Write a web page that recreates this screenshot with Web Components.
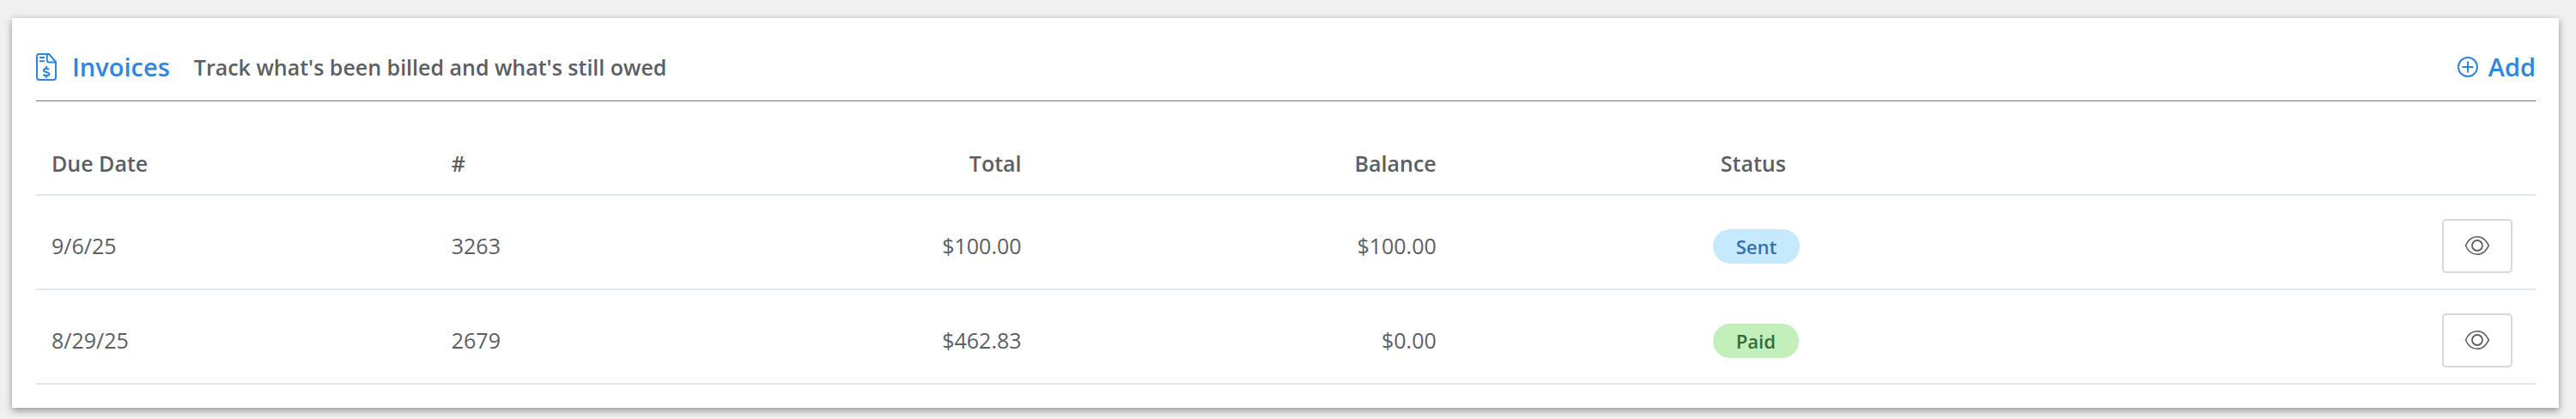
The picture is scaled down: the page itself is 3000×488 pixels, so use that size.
<!DOCTYPE html>
<html lang="en">
<head>
<meta charset="utf-8">
<title>Invoices</title>
<style>
  body {
    margin: 0;
    padding: 21px 20px 13px 14px;
    background: #f0f0f0;
    color: #5b5f63;
    font: 400 25px/36px "Open Sans", sans-serif;
  }
</style>
</head>
<body>
<panel-card>
  <ui-icon slot="icon" name="invoice"></ui-icon>
  <span slot="title">Invoices</span>
  <span slot="hint">Track what's been billed and what's still owed</span>
  <add-button slot="action">Add</add-button>
  <invoice-table></invoice-table>
</panel-card>

<script>
const ICONS = {
  invoice: [24, 32, `<g fill="none" stroke="currentColor" stroke-width="2"><path d="M3.500 1H15L23 10V28Q23 31 20 31H4Q1 31 1 28V3.500Q1 1 3.500 1Z"/><path d="M12.800 1V8Q12.800 10.500 15 10.500H23"/><path d="M4 5H10M4 9.200H10" stroke-width="2"/><path d="M15.200 19Q14 18 12 18Q9 18 9 20Q9 21.400 12 22Q15.200 22.600 15.200 24.300Q15.200 26 12 26Q10 26 8.400 25M12 15V18M12 26V28.800" stroke-width="2.200"/></g>`],
  plus: [24, 24, `<g fill="none" stroke="currentColor" stroke-width="2"><circle cx="12" cy="12" r="11"/><path d="M12 5.500V18.500M5.500 12H18.500"/></g>`],
  eye: [30, 24, `<g fill="none" stroke="currentColor" stroke-width="1.500"><path d="M1.500 12C4 6 8 1.700 15 1.700S25 6 28.500 12C25 18 22 22.300 15 22.300S4 18 1.500 12Z"/><circle cx="15" cy="12" r="6" stroke-width="1.800"/></g>`]
};

class UiIcon extends HTMLElement {
  connectedCallback() {
    if (this.shadowRoot) return;
    const [w, h, art] = ICONS[this.getAttribute("name")];
    this.attachShadow({ mode: "open" }).innerHTML =
      `<style>:host{display:inline-flex;flex:none}svg{display:block}</style>
       <svg width="${w}" height="${h}" viewBox="0 0 ${w} ${h}" aria-hidden="true">${art}</svg>`;
  }
}
customElements.define("ui-icon", UiIcon);

function define(name, html) {
  customElements.define(name, class extends HTMLElement {
    constructor() {
      super();
      this.attachShadow({ mode: "open" }).innerHTML = html;
    }
  });
}

define("add-button", `
<style>
  :host { display: block; }
  button { display: flex; align-items: center; gap: 12px; padding: 0; border: 0; background: none; color: #2f86dc; font: inherit; cursor: pointer; }
</style>
<button type="button"><ui-icon name="plus"></ui-icon><slot></slot></button>`);

define("view-button", `
<style>
  :host { display: inline-block; vertical-align: top; }
  button { display: flex; align-items: center; justify-content: center; width: 82px; height: 63px; padding: 0; border: 2px solid #d8d8d8; border-radius: 5px; background: #fff; color: inherit; cursor: pointer; }
</style>
<button type="button" aria-label="View invoice"><ui-icon name="eye"></ui-icon></button>`);

define("status-badge", `
<style>
  :host { display: inline-block; vertical-align: top; padding: 0 27px; border-radius: 20px; font-size: 22px; line-height: 40px; font-weight: 600; background: #c7e9fd; color: #3470b2; }
  :host([kind="paid"]) { background: #c3efba; color: #376a38; }
</style>
<slot></slot>`);

define("panel-card", `
<style>
  :host { display: block; padding: 0 27px 27px 28px; background: #fff; box-shadow: 0 4px 8px rgba(0,0,0,.3), 0 0 8px rgba(0,0,0,.12); }
  header { display: flex; align-items: center; gap: 28px; padding: 38px 0 20px; border-bottom: 1px solid #3b82cf; margin-bottom: 36px; }
  h2 { display: flex; align-items: center; gap: 18px; margin: 0; color: #2f86dc; font-size: 29px; line-height: 38px; font-weight: 600; }
  p { flex: 1; margin: 0; font-weight: 600; }
  .action { color: #2f86dc; font-size: 29px; font-weight: 600; }
</style>
<header>
  <h2><slot name="icon"></slot><slot name="title"></slot></h2>
  <p><slot name="hint"></slot></p>
  <div class="action"><slot name="action"></slot></div>
</header>
<slot></slot>`);

define("invoice-table", `
<style>
  :host { display: block; }
  table { width: 100%; table-layout: fixed; border-collapse: separate; border-spacing: 0; }
  th, td { box-sizing: border-box; padding: 0 18px; text-align: left; border-bottom: 2px solid #e1e6ea; }
  thead th, thead td { height: 74px; font-weight: 600; }
  tbody td { height: 110px; padding-top: 8px; }
  tbody .state { padding-top: 10px; }
  .date { width: 16%; }
  .number { width: 7.440%; }
  .money { width: 16.600%; }
  .status { width: 26%; }
  .num { text-align: right; }
  .state { padding-left: calc(10vw + 4px); }
  th.state { padding-left: calc(10vw + 13px); }
  .view { text-align: right; padding-right: 27px; }
</style>
<table>
  <colgroup><col class="date"><col class="number"><col class="money"><col class="money"><col class="status"><col></colgroup>
  <thead>
    <tr><th scope="col">Due Date</th><th scope="col">#</th><th scope="col" class="num">Total</th><th scope="col" class="num">Balance</th><th scope="col" class="state">Status</th><td></td></tr>
  </thead>
  <tbody>
    <tr><td>9/6/25</td><td>3263</td><td class="num">$100.00</td><td class="num">$100.00</td><td class="state"><status-badge>Sent</status-badge></td><td class="view"><view-button></view-button></td></tr>
    <tr><td>8/29/25</td><td>2679</td><td class="num">$462.83</td><td class="num">$0.00</td><td class="state"><status-badge kind="paid">Paid</status-badge></td><td class="view"><view-button></view-button></td></tr>
  </tbody>
</table>`);
</script>
</body>
</html>
